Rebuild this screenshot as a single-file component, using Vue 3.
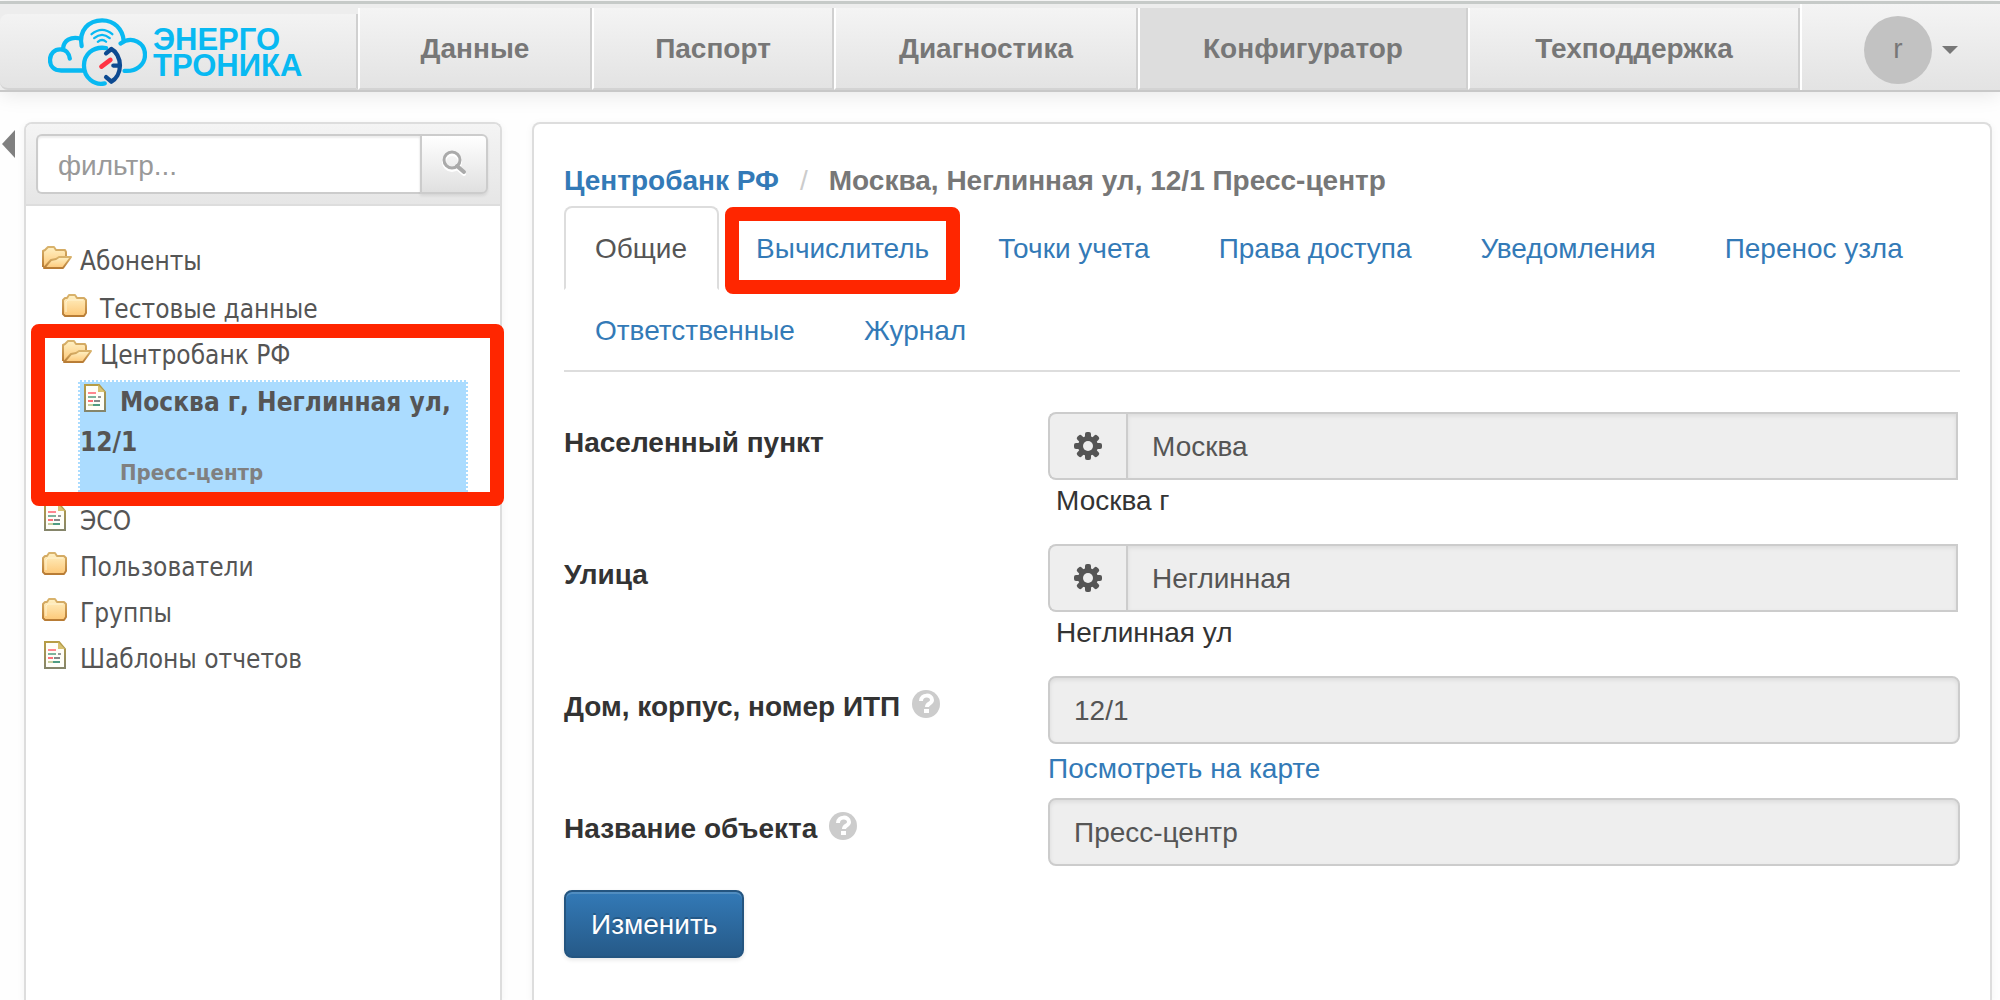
<script setup>
import { ref } from 'vue'

const filter = ref('')

const sections = [
  { title: 'Данные' },
  { title: 'Паспорт' },
  { title: 'Диагностика' },
  { title: 'Конфигуратор', active: true },
  { title: 'Техподдержка' }
]

const tabs = [
  { title: 'Общие', active: true },
  { title: 'Вычислитель', marked: true },
  { title: 'Точки учета' },
  { title: 'Права доступа' },
  { title: 'Уведомления' },
  { title: 'Перенос узла' },
  { title: 'Ответственные' },
  { title: 'Журнал' }
]

const fields = [
  { id: 'city', label: 'Населенный пункт', value: 'Москва', picker: true, note: 'Москва г' },
  { id: 'street', label: 'Улица', value: 'Неглинная', picker: true, note: 'Неглинная ул' },
  { id: 'house', label: 'Дом, корпус, номер ИТП', value: '12/1', help: true, link: 'Посмотреть на карте' },
  { id: 'object', label: 'Название объекта', value: 'Пресс-центр', help: true }
]
</script>

<template>
  <div class="page">
    <!-- Shared icon shapes -->
    <svg class="sprites" aria-hidden="true">
      <defs>
        <linearGradient id="paper" x1="0" y1="0" x2="0" y2="1">
          <stop offset="0" stop-color="#fff1c4" />
          <stop offset="1" stop-color="#fdc878" />
        </linearGradient>
        <linearGradient id="edge" x1="0" y1="0" x2="0" y2="1">
          <stop offset="0" stop-color="#d9b36c" />
          <stop offset="1" stop-color="#b87c35" />
        </linearGradient>
        <linearGradient id="sheet" x1="0" y1="0" x2="0" y2="1">
          <stop offset="0" stop-color="#b89d45" />
          <stop offset="1" stop-color="#85856a" />
        </linearGradient>
        <symbol id="folder" viewBox="0 0 38 28">
          <path d="M1 9 L3 7 H5 L7 4 H13 L15 7 H22 L24 9 V22 L22 25 H3 L1 23 Z" fill="url(#paper)" stroke="url(#edge)" stroke-width="2" stroke-linejoin="round" />
          <path d="M4 21 V11 L6 9 H21" fill="none" stroke="#fff3d0" stroke-width="1" />
        </symbol>
        <symbol id="folder-open" viewBox="0 0 38 28">
          <path d="M1 24 V8 L3 7 L6 4 H12 L14 7 H23 L24 9 V14" fill="url(#paper)" stroke="url(#edge)" stroke-width="2" stroke-linejoin="round" />
          <path d="M2 25 L9 17 L14 16 L17 14 H29 L21 25 Z" fill="url(#paper)" stroke="url(#edge)" stroke-width="2" stroke-linejoin="round" />
        </symbol>
        <symbol id="report" viewBox="0 0 38 28">
          <path d="M3 1 H17 L23 8 V27 H3 Z" fill="#fffef8" stroke="url(#sheet)" stroke-width="2" />
          <path d="M16 1 V8 H23 Z" fill="#d8c272" />
          <path d="M6 9 H14" stroke="#ff8890" stroke-width="2" />
          <path d="M6 13 H14" stroke="#7fb39c" stroke-width="2" />
          <path d="M16 13 H19" stroke="#999" stroke-width="2" />
          <path d="M6 17 H11" stroke="#ff7078" stroke-width="2" />
          <path d="M12 17 H18" stroke="#888" stroke-width="2" />
          <path d="M6 21 H12" stroke="#c9cf9f" stroke-width="2" />
          <path d="M11 21 H18" stroke="#4f9c82" stroke-width="2" />
        </symbol>
      </defs>
    </svg>

    <header class="topbar">
      <a class="brand" href="#">
        <svg class="brand-mark" viewBox="0 0 300 204" aria-hidden="true">
          <g fill="none" stroke="#08b9f2" stroke-width="13" stroke-linecap="round">
            <path d="M108 158 H40 C16 158 6 143 6 126 C6 106 20 94 37 94 C54 94 64 106 66 122" />
            <path d="M46 90 C48 68 68 54 98 61" />
            <path d="M102 84 C92 36 124 6 164 6 C202 6 226 34 229 66" />
            <path d="M220 76 C256 50 294 76 294 110 C294 140 268 162 232 159" />
            <path d="M176 90 C136 84 109 110 109 143 C109 180 140 204 172 197" />
            <g stroke-width="7">
              <path d="M132 48 Q164 22 195 48" />
              <path d="M140 60 Q164 40 187 60" />
              <path d="M151 71 Q164 60 176 71" />
            </g>
          </g>
          <path d="M176 106 L192 93 C206 100 218 120 218 143 C218 166 206 184 192 192 L176 178 M218 143 H198" fill="none" stroke="#0d4a91" stroke-width="13" stroke-linecap="round" stroke-linejoin="round" />
          <path d="M162 146 L189 126" stroke="#ff3344" stroke-width="14" stroke-linecap="round" />
        </svg>
        <span class="brand-name">
          <span>ЭНЕРГО</span>
          <span>ТРОНИКА</span>
        </span>
      </a>
      <nav class="sections">
        <a v-for="s in sections" :key="s.title" href="#" class="section" :class="{ active: s.active }">{{ s.title }}</a>
      </nav>
      <button class="user" type="button">
        <span class="avatar">r</span>
        <span class="caret"></span>
      </button>
    </header>

    <div class="body">
      <button class="collapse" type="button" aria-label="Свернуть"></button>

      <aside class="sidebar">
        <form class="search" @submit.prevent>
          <input v-model="filter" class="search-input" type="text" placeholder="фильтр..." aria-label="фильтр" />
          <button class="search-button" type="submit" aria-label="Найти">
            <svg width="26" height="26" viewBox="0 0 26 26" aria-hidden="true">
              <g fill="none" stroke="#fff" stroke-width="4" transform="translate(0 2)">
                <circle cx="11" cy="10" r="8" />
                <path d="M16 16 L23 22" stroke-linecap="round" />
              </g>
              <circle cx="11" cy="10" r="8" fill="none" stroke="#aaa" stroke-width="3" />
              <path d="M16 16 L23 22" stroke="#aaa" stroke-width="4" stroke-linecap="round" />
            </svg>
          </button>
        </form>

        <ul class="tree">
          <li>
            <a class="node" href="#"><svg class="node-icon"><use href="#folder-open" /></svg>Абоненты</a>
            <ul class="branch">
              <li>
                <a class="node" href="#"><svg class="node-icon"><use href="#folder" /></svg>Тестовые данные</a>
              </li>
              <li class="marked-branch">
                <a class="node" href="#"><svg class="node-icon"><use href="#folder-open" /></svg>Центробанк РФ</a>
                <a class="node selected" href="#">
                  <svg class="node-icon"><use href="#report" /></svg>Москва г, Неглинная ул, 12/1
                  <span class="node-note">Пресс-центр</span>
                </a>
                <span class="marker"></span>
              </li>
            </ul>
          </li>
          <li><a class="node" href="#"><svg class="node-icon"><use href="#report" /></svg>ЭСО</a></li>
          <li><a class="node" href="#"><svg class="node-icon"><use href="#folder" /></svg>Пользователи</a></li>
          <li><a class="node" href="#"><svg class="node-icon"><use href="#folder" /></svg>Группы</a></li>
          <li><a class="node" href="#"><svg class="node-icon"><use href="#report" /></svg>Шаблоны отчетов</a></li>
        </ul>
      </aside>

      <main class="content">
        <div class="crumbs">
          <a href="#">Центробанк РФ</a>
          <span class="slash">/</span>
          <span>Москва, Неглинная ул, 12/1 Пресс-центр</span>
        </div>

        <ul class="tabs">
          <li v-for="t in tabs" :key="t.title" class="tab">
            <a href="#" class="tab-link" :class="{ active: t.active }">{{ t.title }}</a>
            <span v-if="t.marked" class="marker"></span>
          </li>
        </ul>

        <form class="form" @submit.prevent>
          <div v-for="f in fields" :key="f.id" class="row">
            <div class="label-cell">
              <label :for="f.id">{{ f.label }}</label>
              <svg v-if="f.help" class="help" viewBox="0 0 28 28" aria-hidden="true">
                <circle cx="14" cy="14" r="14" fill="#ccc" />
                <path d="M9 11 C9 4 20 4 20 10 C20 14 15 13 15 17" fill="none" stroke="#fff" stroke-width="4" />
                <rect x="12" y="19" width="5" height="4" fill="#fff" />
              </svg>
            </div>
            <div>
              <div class="control" :class="{ grouped: f.picker }">
                <button v-if="f.picker" class="addon" type="button" aria-label="Настроить">
                  <svg width="28" height="28" viewBox="0 0 28 28" aria-hidden="true">
                    <g fill="#555">
                      <rect v-for="a in [0, 45, 90, 135]" :key="a" x="11" y="0" width="6" height="28" rx="2" :transform="`rotate(${a} 14 14)`" />
                      <circle cx="14" cy="14" r="10" />
                    </g>
                    <circle cx="14" cy="14" r="5" fill="#eee" />
                  </svg>
                </button>
                <input :id="f.id" class="input" type="text" :value="f.value" readonly />
              </div>
              <div v-if="f.note" class="note">{{ f.note }}</div>
              <a v-if="f.link" class="map-link" href="#">{{ f.link }}</a>
            </div>
          </div>
          <button class="submit" type="submit">Изменить</button>
        </form>
      </main>
    </div>
  </div>
</template>

<style>
body {
  margin: 0;
  background: #fefefe;
}
</style>

<style scoped>
* {
  box-sizing: border-box;
}

.page {
  display: flex;
  flex-direction: column;
  min-height: 100vh;
  padding-top: 1px;
  font: 28px/40px "Liberation Sans", Arial, sans-serif;
  color: #333;
}

a {
  color: #337ab7;
  text-decoration: none;
}

button,
input {
  font: inherit;
  margin: 0;
}

ul {
  list-style: none;
  margin: 0;
  padding: 0;
}

.sprites {
  position: absolute;
  width: 0;
  height: 0;
}

/* Header */
.topbar {
  display: flex;
  height: 91px;
  border-top: 3px solid #c6cac8;
  border-bottom: 2px solid #c8c8c8;
  background: #ededed;
  box-shadow: 0 2px 20px rgba(0, 0, 0, 0.1);
}

.brand {
  display: flex;
  flex: 0 0 358px;
  align-items: center;
  gap: 6px;
  margin-top: 10px;
  padding: 2px 0 0 48px;
  border-right: 2px solid #d0d0d0;
  border-bottom: 2px solid #d3d3d3;
  border-radius: 8px 0 0 8px;
  background: linear-gradient(#f3f3f3, #e3e3e3);
}

.brand-mark {
  width: 99px;
  height: 68px;
}

.brand-name {
  display: flex;
  flex-direction: column;
  padding-top: 2px;
  color: #08b9f2;
  font-size: 31px;
  font-weight: bold;
  line-height: 26px;
}

.sections {
  display: grid;
  flex: 1;
  grid-template-columns: 234fr 242fr 304fr 330fr 332fr;
  margin-top: 4px;
}

.section {
  padding-top: 21px;
  border-left: 2px solid #fff;
  border-right: 2px solid #d0d0d0;
  border-bottom: 2px solid #d3d3d3;
  background: linear-gradient(#f4f4f4, #e3e3e3);
  color: #777;
  font-weight: bold;
  text-align: center;
}

.section.active {
  background: #ddd;
}

.user {
  display: flex;
  flex: 0 0 200px;
  align-items: center;
  gap: 10px;
  padding: 6px 0 0 62px;
  border: 0;
  border-left: 2px solid #fff;
  background: linear-gradient(#f4f4f4, #e3e3e3);
  color: #777;
}

.avatar {
  width: 68px;
  height: 68px;
  border-radius: 50%;
  background: #c2c2c2;
  line-height: 66px;
}

.caret {
  border: 8px solid transparent;
  border-top-color: #777;
  border-bottom: 0;
}

/* Columns */
.body {
  display: flex;
  flex: 1;
  align-items: stretch;
  padding: 30px 8px 0 0;
}

.collapse {
  width: 13px;
  height: 28px;
  margin: 8px 9px 0 2px;
  padding: 0;
  border: 0;
  background: #808080;
  clip-path: polygon(100% 0, 100% 100%, 0 50%);
}

.sidebar {
  flex: 0 0 478px;
  min-width: 0;
  border: 2px solid #ddd;
  border-bottom: 0;
  border-radius: 8px 8px 0 0;
  background: #fff;
  box-shadow: 0 2px 8px rgba(0, 0, 0, 0.05);
}

.search {
  display: flex;
  padding: 10px 12px 10px 10px;
  border-bottom: 2px solid #ddd;
  border-radius: 6px 6px 0 0;
  background: linear-gradient(#f4f4f4, #e6e6e6);
}

.search-input {
  flex: 1;
  min-width: 0;
  height: 60px;
  padding: 3px 20px 0;
  border: 2px solid #ccc;
  border-right: 0;
  border-radius: 6px 0 0 6px;
  background: #fff;
  box-shadow: inset 0 2px 2px rgba(0, 0, 0, 0.07);
}

.search-input::placeholder {
  color: #999;
  opacity: 1;
}

.search-button {
  width: 68px;
  padding: 6px 0 0;
  border: 2px solid #ccc;
  border-radius: 0 6px 6px 0;
  background: linear-gradient(#fff, #e0e0e0);
  box-shadow: 0 2px 3px rgba(0, 0, 0, 0.08);
}

/* Tree */
.tree {
  padding: 32px 32px 0 16px;
  font-family: "DejaVu Sans Condensed", "DejaVu Sans", sans-serif;
  font-stretch: condensed;
  font-size: 26px;
}

.branch {
  padding: 2px 0 0 20px;
}

.node {
  display: block;
  padding: 3px 0;
  color: #555;
}

.node-icon {
  width: 38px;
  height: 28px;
  vertical-align: -1px;
}

.selected {
  margin: 2px 0 4px 16px;
  padding: 0 0 8px;
  border: 2px dotted #fff;
  background: #abdcff;
  font-weight: bold;
}

.selected .node-icon {
  margin-left: 2px;
}

.node-note {
  display: block;
  padding-left: 40px;
  color: #808080;
  font-size: 22px;
  line-height: 22px;
}

.marked-branch {
  position: relative;
}

/* Red callout frames */
.marker {
  position: absolute;
  border: 14px solid #ff2600;
  border-radius: 8px;
  pointer-events: none;
}

.marked-branch .marker {
  inset: -8px -36px -12px -31px;
}

.tab .marker {
  inset: 1px 7px -4px 0;
}

/* Main panel */
.content {
  flex: 1;
  min-width: 0;
  margin-left: 30px;
  padding: 37px 30px 40px;
  border: 2px solid #ddd;
  border-bottom: 0;
  border-radius: 8px 8px 0 0;
  background: #fff;
  box-shadow: 0 2px 8px rgba(0, 0, 0, 0.05);
}

.crumbs {
  display: flex;
  gap: 21px;
  margin-bottom: 5px;
  color: #777;
  font-weight: bold;
}

.slash {
  color: #ccc;
  font-weight: normal;
}

.tabs {
  display: flex;
  flex-wrap: wrap;
  border-bottom: 2px solid #ddd;
}

.tab {
  position: relative;
  margin-bottom: -2px;
}

.tab-link {
  display: block;
  margin-right: 6px;
  padding: 21px 30px 19px 29px;
  border: 2px solid transparent;
  border-radius: 8px 8px 0 0;
}

.tab-link.active {
  border-color: #ddd;
  border-bottom-color: transparent;
  color: #555;
}

.form {
  padding-top: 40px;
}

.row {
  display: grid;
  grid-template-columns: minmax(0, 484fr) minmax(0, 912fr);
  margin-bottom: 23px;
}

.row:nth-child(3) {
  margin-bottom: 9px;
}

.row:nth-child(4) {
  margin-bottom: 24px;
}

.label-cell {
  display: flex;
  gap: 12px;
  padding-top: 11px;
  font-weight: bold;
}

.help {
  width: 28px;
  height: 28px;
  margin-top: 3px;
}

.control {
  display: flex;
}

.grouped {
  padding-right: 2px;
}

.addon {
  display: flex;
  flex: 0 0 78px;
  align-items: center;
  justify-content: center;
  border: 2px solid #ccc;
  border-right: 0;
  border-radius: 8px 0 0 8px;
  background: #eee;
}

.input {
  flex: 1;
  min-width: 0;
  height: 68px;
  padding: 13px 24px 11px;
  border: 2px solid #ccc;
  border-radius: 8px;
  background: #eee;
  box-shadow: inset 0 2px 4px rgba(0, 0, 0, 0.08);
  color: #555;
}

.grouped .input {
  border-radius: 0;
}

.note {
  padding: 1px 0 0 8px;
}

.map-link {
  display: block;
  padding-top: 5px;
}

.submit {
  height: 68px;
  padding: 2px 25px 0;
  border: 2px solid #245580;
  border-radius: 8px;
  background: linear-gradient(#337ab7, #265a88);
  box-shadow: inset 0 2px 0 rgba(255, 255, 255, 0.15), 0 2px 4px rgba(0, 0, 0, 0.1);
  color: #fff;
  text-shadow: 0 -2px 0 rgba(0, 0, 0, 0.2);
}
</style>
